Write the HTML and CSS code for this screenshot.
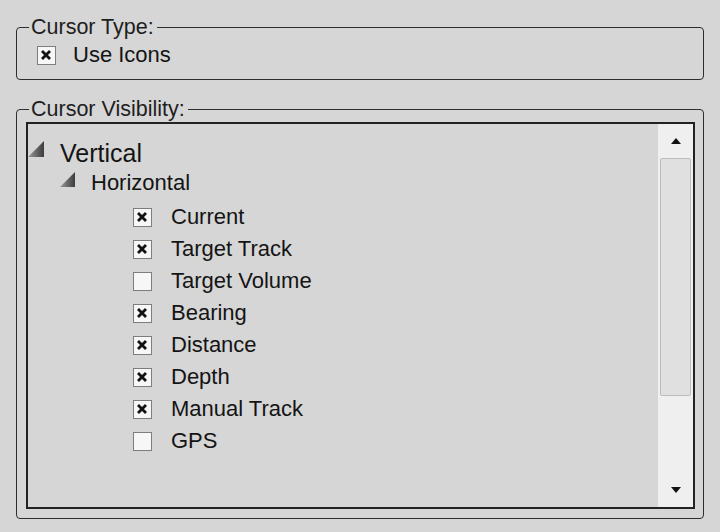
FILE: index.html
```html
<!DOCTYPE html>
<html lang="en">
<head>
  <meta charset="UTF-8">
  <meta name="viewport" content="width=device-width, initial-scale=1.0">
  <title>Cursor Settings</title>
  <link rel="stylesheet" href="styles.css">
</head>
<body>
  <div class="panel">
    <fieldset class="group group-type">
      <legend>Cursor Type:</legend>
      <label class="check-row">
        <span class="check on"><svg viewBox="0 0 16 16"><path d="M4 4 L12 12 M12 4 L4 12"/></svg></span>
        Use Icons
      </label>
    </fieldset>

    <fieldset class="group group-vis">
      <legend>Cursor Visibility:</legend>
      <div class="listbox">
        <div class="tree">
          <div class="node node-root">
            <svg class="expander" viewBox="0 0 16 16"><defs><linearGradient id="tri" x1="0" y1="0" x2="1" y2="0"><stop offset="0" stop-color="#9a9a9a"/><stop offset="1" stop-color="#3c3c3c"/></linearGradient></defs><polygon points="0,16 16,0 16,16" fill="url(#tri)"/></svg>
            <span>Vertical</span>
          </div>
          <div class="node node-child">
            <svg class="expander small" viewBox="0 0 16 16"><polygon points="0,16 16,0 16,16" fill="url(#tri)"/></svg>
            <span>Horizontal</span>
          </div>
          <ul class="items">
            <li><span class="check on"><svg viewBox="0 0 16 16"><path d="M4 4 L12 12 M12 4 L4 12"/></svg></span>Current</li>
            <li><span class="check on"><svg viewBox="0 0 16 16"><path d="M4 4 L12 12 M12 4 L4 12"/></svg></span>Target Track</li>
            <li><span class="check"></span>Target Volume</li>
            <li><span class="check on"><svg viewBox="0 0 16 16"><path d="M4 4 L12 12 M12 4 L4 12"/></svg></span>Bearing</li>
            <li><span class="check on"><svg viewBox="0 0 16 16"><path d="M4 4 L12 12 M12 4 L4 12"/></svg></span>Distance</li>
            <li><span class="check on"><svg viewBox="0 0 16 16"><path d="M4 4 L12 12 M12 4 L4 12"/></svg></span>Depth</li>
            <li><span class="check on"><svg viewBox="0 0 16 16"><path d="M4 4 L12 12 M12 4 L4 12"/></svg></span>Manual Track</li>
            <li><span class="check"></span>GPS</li>
          </ul>
        </div>

        <div class="scrollbar">
          <div class="sb-btn"><svg viewBox="0 0 10 6"><polygon points="0,6 5,0 10,6"/></svg></div>
          <div class="sb-track"><div class="sb-thumb"></div></div>
          <div class="sb-btn"><svg viewBox="0 0 10 6"><polygon points="0,0 10,0 5,6"/></svg></div>
        </div>
      </div>
    </fieldset>
  </div>
</body>
</html>
```

FILE: styles.css
```css
/* Page */
body {
  margin: 0;
  background: #d6d6d6;
  font-family: 'Liberation Sans', Arial, sans-serif;
  color: #141414;
}

.panel {
  display: flex;
  flex-direction: column;
  padding: 16px 16px 0 16px;
  width: 688px;
}

/* Group boxes */
.group {
  margin: 0;
  padding: 0;
  border: 1px solid #2e2e2e;
  border-radius: 4px;
  min-width: 0;
}

.group legend {
  margin-left: 12px;
  padding: 0 3px 0 2px;
  font-size: 21.5px;
  line-height: 22px;
  color: #1e1e1e;
}

.group-type {
  padding: 5px 0 12px 0;
}

.group-vis {
  margin-top: 18px;
  padding: 2px 8px 9px 0;
}

/* Checkboxes */
.check {
  display: inline-block;
  box-sizing: border-box;
  width: 19px;
  height: 19px;
  border: 1.5px solid #7e7e7e;
  background: #f7f7f7;
  flex: none;
}

.check svg {
  display: block;
  width: 16px;
  height: 16px;
}

.check path {
  stroke: #111;
  stroke-width: 2.8;
  fill: none;
}

.check-row {
  display: flex;
  align-items: center;
  gap: 17px;
  height: 24px;
  margin-left: 20px;
  font-size: 22px;
}

/* List box */
.listbox {
  display: flex;
  height: 383px;
  margin-left: 9px;
  border: 2px solid #222;
  background: #d6d6d6;
}

.tree {
  flex: 1;
  padding-top: 14px;
}

.node {
  display: flex;
  align-items: center;
  height: 30px;
}

.node-root {
  font-size: 25px;
  gap: 16px;
}

.node-child {
  padding-left: 32px;
  font-size: 22px;
  gap: 16px;
}

.expander {
  width: 16px;
  height: 16px;
  margin-top: -8px;
}

.expander.small {
  width: 15px;
  height: 15px;
}

.items {
  list-style: none;
  margin: 3px 0 0 0;
  padding: 0 0 0 105px;
}

.items li {
  display: flex;
  align-items: center;
  gap: 19px;
  height: 32px;
  font-size: 22px;
}

/* Scrollbar */
.scrollbar {
  width: 35px;
  display: flex;
  flex-direction: column;
  background: #efefef;
}

.sb-btn {
  height: 34px;
  display: flex;
  align-items: center;
  justify-content: center;
}

.sb-btn svg {
  width: 10px;
  height: 6px;
  fill: #111;
}

.sb-track {
  flex: 1;
}

.sb-thumb {
  margin: 0 2px;
  height: 238px;
  box-sizing: border-box;
  border: 1px solid #bdbdbd;
  border-radius: 2px;
  background: #e0e0e0;
}
```
